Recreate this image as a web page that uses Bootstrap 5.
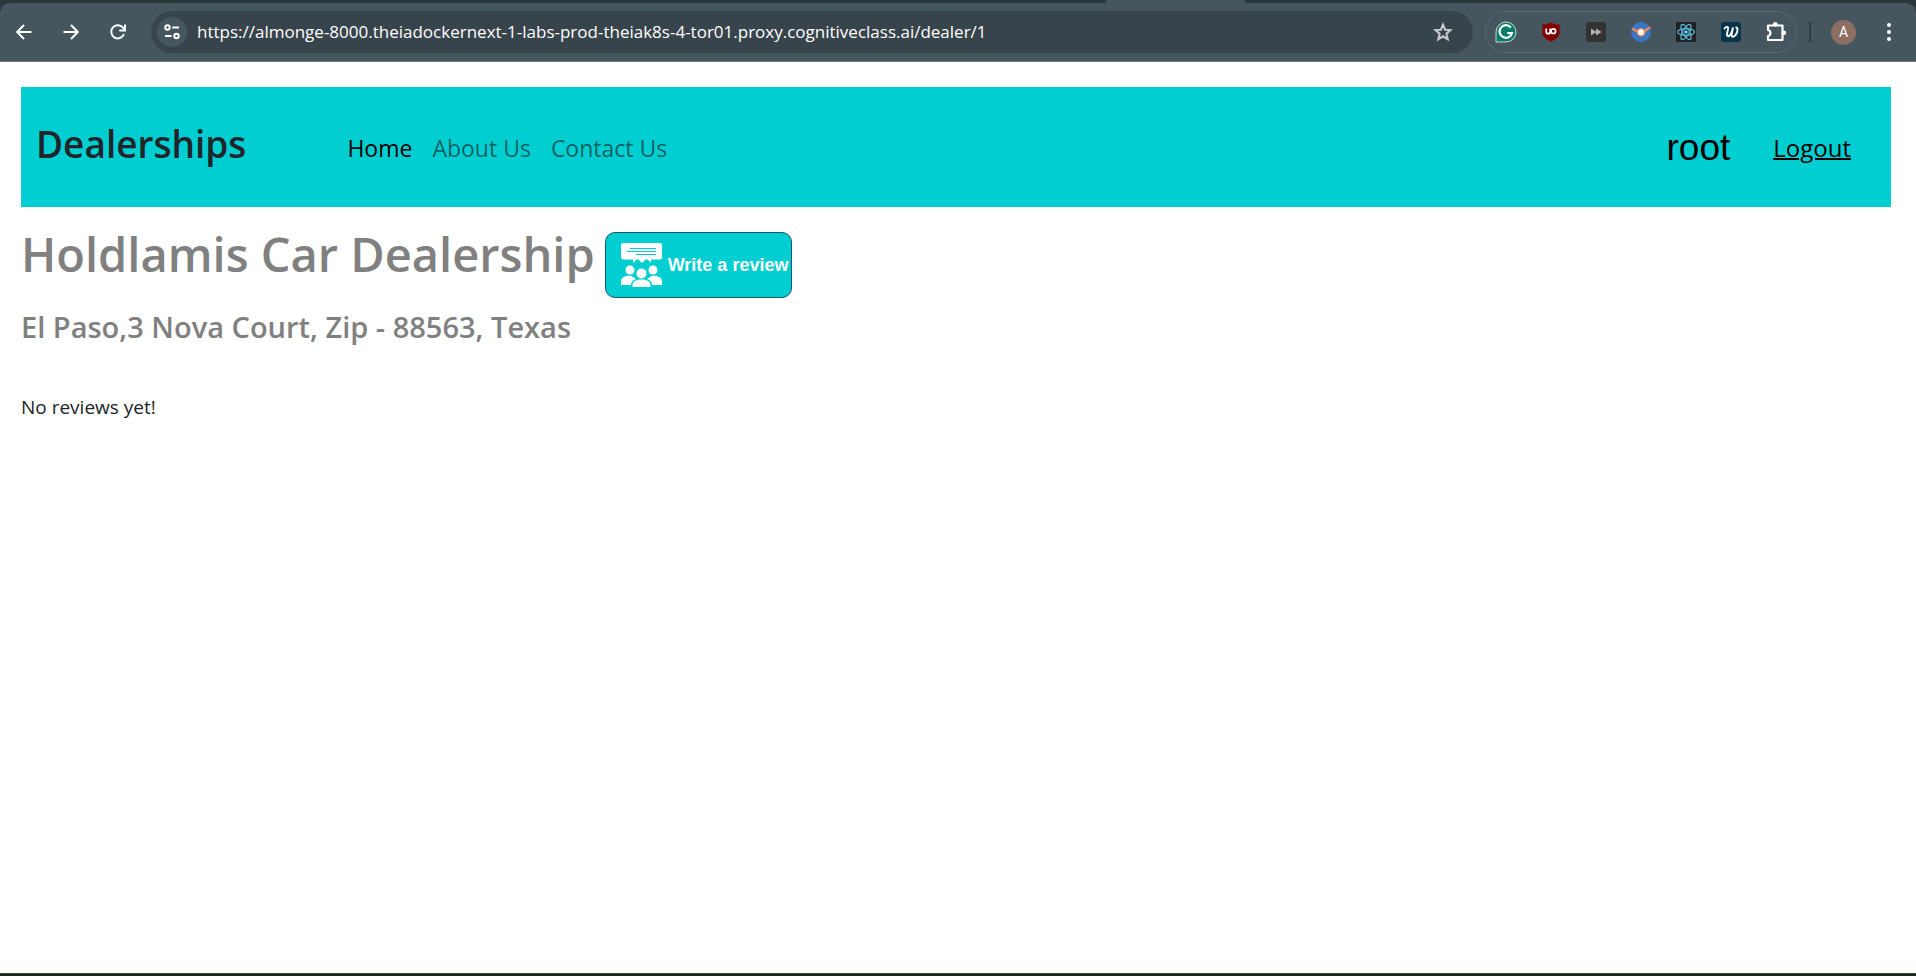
<!DOCTYPE html>
<html lang="en">
<head>
<meta charset="utf-8">
<meta name="viewport" content="width=device-width, initial-scale=1">
<title>Holdlamis Car Dealership</title>
<link href="https://cdn.jsdelivr.net/npm/bootstrap@5.3.0/dist/css/bootstrap.min.css" rel="stylesheet">
<style>
  body { font-family: "Open Sans", "Noto Sans", sans-serif; font-size: 19px; line-height: 30px; }
  svg { display: block; flex: none; }

  /* browser toolbar */
  .chrome-frame { background: #2b373d; padding-top: 3px; position: relative; }
  .active-tab { position: absolute; top: 0; left: 57.7%; width: 7.3%; height: 3px; background: #45565f; }
  .toolbar { background: #45565f; border-bottom: 1px solid #6b7a82; border-radius: 10px 10px 0 0; height: 59px; color: #fff; padding-right: 12px; }
  .tool-btn { background: none; border: 0; padding: 0; color: #fff; width: 30px; height: 30px; display: flex; align-items: center; justify-content: center; flex: none; }
  .nav-tools { gap: 17px; padding-left: 9px; padding-right: 18px; }
  .omnibox { background: #38444b; height: 42px; border-radius: 21px; padding: 0 15px 0 6px; }
  .site-btn { background: #45565f; border-radius: 50%; }
  .url-field { background: none; border: 0; outline: 0; color: #fff; font-size: 17px; line-height: 24px; padding: 0; min-width: 0; margin-left: 10px; }
  .ext-group { border: 1px solid #596b74; border-radius: 21px; height: 42px; gap: 15px; padding: 0 5px; margin-left: 12px; }
  .tool-rule { width: 2px; height: 20px; background: #2f3c43; margin: 0 20px 0 12px; }
  .avatar-btn { width: 25px; height: 25px; border-radius: 50%; background: #8d6e63; font: 14px/25px Roboto, sans-serif; margin-right: 18px; }

  /* page */
  .page-body { padding: 25px 25px 25px 21px; }
  .dealer-nav { background: #00ced1; height: 120px; padding: 2px 40px 0 15px; }
  .dealer-nav .navbar-brand { font-size: 37px; line-height: 50px; font-weight: 600; padding: 0 0 8px; margin: 0 93px 0 0; color: #212529; }
  .dealer-nav .nav-link { font-size: 23px; line-height: 34px; color: rgba(0,0,0,.55); }
  .dealer-nav .nav-link.active { color: #000; }
  .user-name { font: 37px/50px "Liberation Sans", Arial, sans-serif; color: #000; margin-right: 43px; }
  .dealer-nav .logout-link { font-size: 24px; line-height: 34px; color: #000; text-decoration-thickness: 2px; }
  .dealer-head { margin-top: 25px; gap: 10px; }
  .dealer-title { font-size: 47px; line-height: 44px; font-weight: 600; color: gray; }
  .dealer-address { font-size: 29px; line-height: 36px; font-weight: 600; color: gray; margin: 11px 0 47px; }
  .review-btn { width: 187px; height: 66px; border: 1px solid #17586e; border-radius: 10px; background: #00ced1; color: #fff; padding: 0 2px 0 15px; font: bold 18px/24px "Liberation Sans", Arial, sans-serif; gap: 6px; white-space: nowrap; }
  .task-strip { height: 3px; background: #1f2917; border-top: 1px solid #3a4438; }
</style>
</head>
<body class="d-flex flex-column min-vh-100 bg-white">

<header class="chrome-frame">
  <div class="active-tab"></div>
  <div class="toolbar d-flex align-items-center">
    <div class="nav-tools d-flex">
      <button class="tool-btn" type="button" aria-label="Back"><svg width="16" height="16" viewBox="0 0 16 16" fill="none" stroke="#fff" stroke-width="2"><path d="M15.500 8H1.500M8 1 1.200 8 8 15"/></svg></button>
      <button class="tool-btn" type="button" aria-label="Forward"><svg width="16" height="16" viewBox="0 0 16 16" fill="none" stroke="#fff" stroke-width="2"><path d="M.5 8h14M8 1l6.800 7L8 15"/></svg></button>
      <button class="tool-btn" type="button" aria-label="Reload"><svg width="16" height="16" viewBox="0 0 16 16" fill="none" stroke="#fff" stroke-width="2"><path d="M14 10.200A6.600 6.600 0 1 1 13.300 4M15 .5v6H9.200M14.500 5.500 12.500 3"/></svg></button>
    </div>
    <div class="omnibox d-flex align-items-center flex-grow-1">
      <button class="tool-btn site-btn" type="button" aria-label="Site information"><svg width="16" height="16" viewBox="0 0 16 16" fill="none" stroke="#fff" stroke-width="2"><circle cx="3.500" cy="3.500" r="2.200"/><path d="M8.200 3.500H15M1 12h6.500"/><circle cx="12.500" cy="12" r="2.200"/></svg></button>
      <input class="url-field flex-grow-1" type="text" aria-label="Address" value="https://almonge-8000.theiadockernext-1-labs-prod-theiak8s-4-tor01.proxy.cognitiveclass.ai/dealer/1">
      <button class="tool-btn" type="button" aria-label="Bookmark this page"><svg width="20" height="20" viewBox="0 0 20 20" fill="none" stroke="#c7c9ca" stroke-width="2"><path d="m10 2.500 2.100 5.200 5.500.4-4.200 3.600 1.400 5.600-4.800-3-4.800 3 1.400-5.600-4.200-3.600 5.500-.4z"/></svg></button>
    </div>
    <div class="ext-group d-flex align-items-center">
      <button class="tool-btn" type="button" aria-label="Grammarly"><svg width="22" height="22" viewBox="0 0 22 22"><path d="M1 21V11A10 10 0 1 1 11 21z" fill="#0b7a66" stroke="#c9d3d4"/><path d="M15.800 6.500A6.300 6.300 0 1 0 17 12H12.200" fill="none" stroke="#fff" stroke-width="2.200"/></svg></button>
      <button class="tool-btn" type="button" aria-label="uBlock Origin"><svg width="20" height="20" viewBox="0 0 20 20"><path d="M10 .3C7.500 2 4.500 2.500 1.200 2.500V10c0 5 4.500 7.500 8.800 9.800 4.300-2.300 8.800-4.800 8.800-9.800V2.500C15.500 2.500 12.500 2 10 .3z" fill="#800000" stroke="#6c3a40" stroke-width=".6"/><path d="M5.200 6.500v3.200a2 2 0 0 0 4 0V6.500" fill="none" stroke="#fff" stroke-width="1.700"/><circle cx="12.300" cy="9.200" r="2.300" fill="none" stroke="#fff" stroke-width="1.700"/></svg></button>
      <button class="tool-btn" type="button" aria-label="Video speed"><svg width="20" height="20" viewBox="0 0 20 20"><rect width="20" height="20" rx="3" fill="#333"/><path d="M5 6.500 10.500 10 5 13.500zM10 6.500l5.500 3.500-5.500 3.500z" fill="#b5b5b5"/></svg></button>
      <button class="tool-btn" type="button" aria-label="Page helper"><svg width="20" height="20" viewBox="0 0 20 20"><circle cx="10" cy="10" r="10" fill="#3a76c4"/><path d="M.8 5.500 7 7.700a4 4 0 0 1 6 0l6.200-3.500.4 2-5.200 4a4.400 4.400 0 1 1-8.800 0L1 7.800z" fill="#f58a4b"/><circle cx="10" cy="10.300" r="3" fill="#fff"/></svg></button>
      <button class="tool-btn" type="button" aria-label="React tools"><svg width="20" height="20" viewBox="0 0 20 20"><rect width="20" height="20" rx="1" fill="#202124"/><g fill="none" stroke="#58b8d8" stroke-width="1.200"><ellipse cx="10" cy="10" rx="8.500" ry="3.300"/><ellipse cx="10" cy="10" rx="8.500" ry="3.300" transform="rotate(60 10 10)"/><ellipse cx="10" cy="10" rx="8.500" ry="3.300" transform="rotate(120 10 10)"/></g><circle cx="10" cy="10" r="1.700" fill="#61dafb"/></svg></button>
      <button class="tool-btn" type="button" aria-label="Wordtune"><svg width="20" height="20" viewBox="0 0 20 20"><rect width="20" height="20" rx="3" fill="#06344a"/><path d="M3.500 6.500C5 4.200 7.600 4.300 7 7l-1 5c-.5 3 2 3 3.800 0C11 9.800 11.600 7.500 12 5.500c-.5 3-1.500 6-1.300 8 .3 2.200 3.300 1.200 4.800-2 1.300-2.700 1.500-6-.3-6" fill="none" stroke="#fff" stroke-width="1.900" stroke-linecap="round"/></svg></button>
      <button class="tool-btn" type="button" aria-label="Extensions"><svg width="22" height="22" viewBox="0 0 22 22"><path d="M3 4.500H17.500V19H3V15C6.200 14.500 6.200 9.500 3 9z" fill="none" stroke="#fff" stroke-width="2.200" stroke-linejoin="round"/><circle cx="10.300" cy="3.300" r="2.400" fill="#fff"/><circle cx="18.800" cy="11.800" r="2.400" fill="#fff"/></svg></button>
    </div>
    <div class="tool-rule"></div>
    <button class="tool-btn avatar-btn" type="button" aria-label="Profile A">A</button>
    <button class="tool-btn" type="button" aria-label="Menu"><svg width="4" height="18" viewBox="0 0 4 18" fill="#fff"><circle cx="2" cy="2" r="2"/><circle cx="2" cy="9" r="2"/><circle cx="2" cy="16" r="2"/></svg></button>
  </div>
</header>

<main class="page-body flex-grow-1">
  <nav class="navbar navbar-expand dealer-nav">
    <a class="navbar-brand" href="#">Dealerships</a>
    <ul class="navbar-nav me-auto gap-1">
      <li class="nav-item"><a class="nav-link active" aria-current="page" href="#">Home</a></li>
      <li class="nav-item"><a class="nav-link" href="#">About Us</a></li>
      <li class="nav-item"><a class="nav-link" href="#">Contact Us</a></li>
    </ul>
    <span class="user-name">root</span>
    <a class="logout-link" href="#">Logout</a>
  </nav>

  <div class="dealer-head d-flex align-items-start">
    <h1 class="dealer-title mb-0">Holdlamis Car Dealership</h1>
    <button class="review-btn d-flex align-items-center" type="button">
      <svg width="41" height="44" viewBox="0 0 41 44" fill="#fff"><path d="M2.500 0h36A2.500 2.500 0 0 1 41 2.500v11.500a2.500 2.500 0 0 1-2.500 2.500H30v3L26.500 16.500h-2L21 20l-3.500-3.500h-2L12 20v-3.500H2.500A2.500 2.500 0 0 1 0 14V2.500A2.500 2.500 0 0 1 2.500 0z"/><path d="M9 5.500h26M6 8.500h29M15 11.500h20" stroke="#00ced1"/><circle cx="9" cy="27" r="4.500"/><circle cx="32" cy="27" r="4.500"/><path d="M0 42v-4c0-4 5-5.500 10-5.200L15 36c-3 1.200-5 3-5 6zM41 42v-4c0-4-5-5.500-10-5.200L26 36c3 1.200 5 3 5 6z"/><circle cx="20.500" cy="30.500" r="5"/><path d="M11.500 44.500V42c0-4 4.500-5.500 9-5.500s9 1.500 9 5.500v2.500z"/></svg>
      <span>Write a review</span>
    </button>
  </div>
  <h4 class="dealer-address">El Paso,3 Nova Court, Zip - 88563, Texas</h4>
  <div>No reviews yet!</div>
</main>

<footer class="task-strip"></footer>

<script src="https://cdn.jsdelivr.net/npm/bootstrap@5.3.0/dist/js/bootstrap.bundle.min.js"></script>
</body>
</html>
